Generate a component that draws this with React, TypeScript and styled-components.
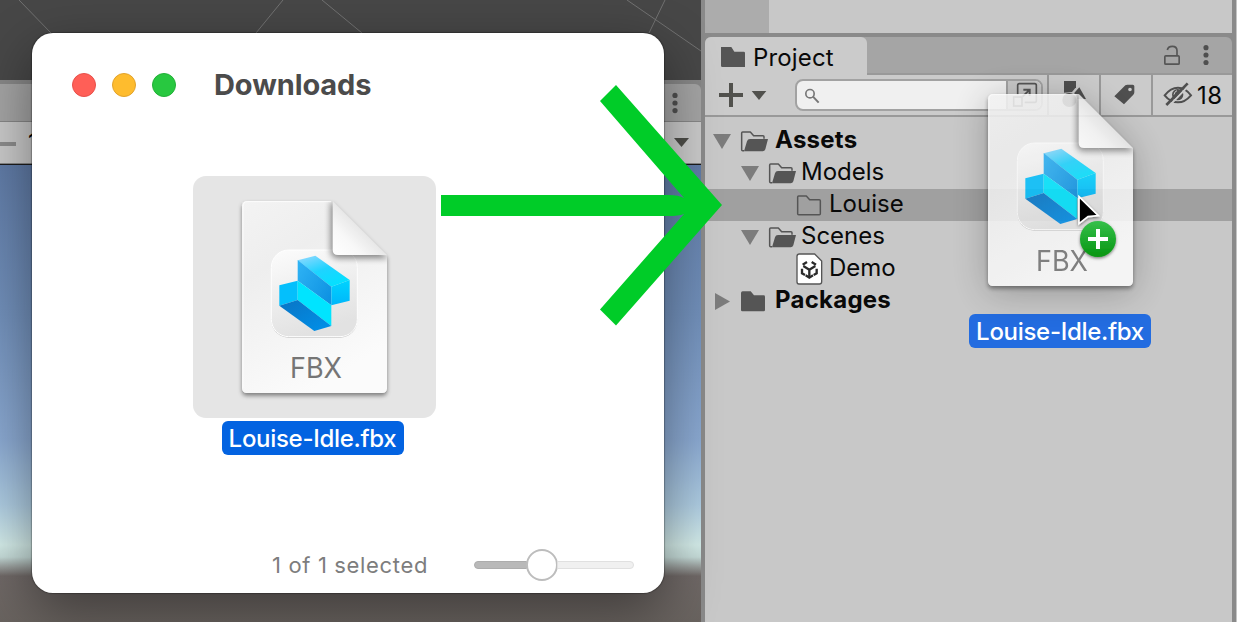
import React from "react";
import styled, { createGlobalStyle } from "styled-components";

const Global = createGlobalStyle`
  * { box-sizing: border-box; }
  html, body { margin: 0; padding: 0; overflow: hidden; }
  body { font-family: Inter, "Liberation Sans", sans-serif; }
  svg { display: block; flex: none; }
`;

const Desktop = styled.main`
  position: relative;
  display: flex;
  width: 1237px;
  height: 622px;
  overflow: hidden;
  background: #8a8a8a;
`;

/* ---------- scene / game column ---------- */
const SceneColumn = styled.section`
  display: flex;
  flex-direction: column;
  width: 701px;
  height: 622px;
  margin-right: 4px;
  background: #868686;
`;
const SceneView = styled.div`
  height: 80px;
  margin-bottom: 4px;
  background: #474747;
`;
const GameTabs = styled.div`
  display: flex;
  justify-content: flex-end;
  align-items: center;
  height: 37px;
  padding-right: 23px;
  background: #a3a3a3;
  border-radius: 0 6px 0 0;
`;
const GameToolbar = styled.div`
  display: flex;
  align-items: center;
  justify-content: space-between;
  height: 41px;
  margin: 1px 0 1px;
  padding-right: 12px;
  background: #c8c8c8;
  font-size: 24px;
`;
const ScaleControl = styled.div`
  display: flex;
  align-items: center;
  gap: 12px;
  height: 40px;
  padding-bottom: 1px;
`;
const ScaleTrack = styled.div`
  width: 16px;
  height: 4px;
  margin-top: 3px;
  background: #8b8b8b;
`;
const Sky = styled.div`
  flex: 1;
  border-top: 1px solid #1c1c1c;
  background: linear-gradient(#5f7aa5 0, #718fb9 150px, #8aa8d0 275px, #adcbe0 340px, #d3ebe8 380px, #c5dbd8 392px, #979c9a 402px, #6f6866 411px, #69635f 457px);
`;

/* ---------- downloads window ---------- */
const FinderWindow = styled.section`
  position: absolute;
  left: 32px;
  top: 33px;
  display: flex;
  flex-direction: column;
  align-items: center;
  width: 632px;
  height: 560px;
  border-radius: 21px;
  background: #fff;
  box-shadow: 0 0 1px 1px rgba(0, 0, 0, 0.26), 0 18px 54px rgba(0, 0, 0, 0.42);
`;
const TitleBar = styled.header`
  display: flex;
  align-items: center;
  align-self: stretch;
  gap: 16px;
  height: 103px;
  padding: 0 40px;
`;
const Light = styled.i<{ $fill: string; $rim: string }>`
  width: 24px;
  height: 24px;
  border-radius: 50%;
  background: ${(p) => p.$fill};
  border: 1px solid ${(p) => p.$rim};
`;
const WindowTitle = styled.h1`
  margin: 0 0 0 22px;
  color: #4b4b4b;
  font-size: 29px;
  font-weight: 700;
  line-height: 36px;
  letter-spacing: -0.1px;
`;
const FileCell = styled.div`
  display: flex;
  flex-direction: column;
  align-items: center;
  margin: 40px 0 0 -68px;
`;
const Selection = styled.div`
  display: flex;
  justify-content: center;
  width: 243px;
  height: 242px;
  padding-top: 25px;
  border-radius: 13px;
  background: #e5e5e5;
`;
const FileLabel = styled.div<{ $bg: string; $nudge?: number }>`
  width: 182px;
  height: 34px;
  margin: 3px ${(p) => p.$nudge ?? 0}px 0 0;
  border-radius: 6px;
  background: ${(p) => p.$bg};
  color: #fff;
  font-size: 24px;
  font-weight: 500;
  line-height: 35px;
  letter-spacing: -0.3px;
  text-align: center;
  white-space: nowrap;
`;
const StatusBar = styled.footer`
  display: flex;
  align-items: center;
  justify-content: flex-end;
  align-self: stretch;
  gap: 46px;
  height: 56px;
  margin-top: auto;
  padding-right: 30px;
  color: #7d7d7d;
  font-size: 22px;
  letter-spacing: 0.65px;
`;
const Slider = styled.div`
  display: flex;
  align-items: center;
  width: 160px;
  height: 32px;
`;
const Track = styled.div<{ $w: number; $filled?: boolean }>`
  width: ${(p) => p.$w}px;
  height: 8px;
  border: 1px solid ${(p) => (p.$filled ? "#adadad" : "#e0e0e0")};
  border-radius: ${(p) => (p.$filled ? "4px 0 0 4px" : "0 4px 4px 0")};
  background: ${(p) => (p.$filled ? "#b9b9b9" : "#f0f0f0")};
`;
const Knob = styled.div`
  width: 32px;
  height: 32px;
  margin: 0 -1px;
  border: 2px solid #bdbdbd;
  border-radius: 50%;
  background: #fff;
`;

/* ---------- project column ---------- */
const ProjectColumn = styled.section`
  display: flex;
  flex-direction: column;
  width: 527px;
  height: 622px;
  background: #8a8a8a;
`;
const RightEdge = styled.div`
  width: 1px;
  margin-left: 4px;
  background: #c4c4c4;
`;
const UpperPanel = styled.div`
  height: 33px;
  margin-bottom: 4px;
  background: #c8c8c8;
`;
const UpperShade = styled.div`
  width: 64px;
  height: 33px;
  background: #acacac;
`;
const Tabs = styled.div`
  display: flex;
  justify-content: space-between;
  height: 38px;
  border-radius: 6px 6px 0 0;
  background: linear-gradient(#a5a5a5 36px, #999 36px);
`;
const Tab = styled.div`
  display: flex;
  align-items: center;
  gap: 8px;
  width: 162px;
  height: 38px;
  padding: 2px 0 0 16px;
  border-radius: 6px 6px 0 0;
  background: #cbcbcb;
  color: #090909;
  font-size: 24px;
  letter-spacing: 0.15px;
`;
const Toolbar = styled.div`
  display: flex;
  height: 42px;
  border-bottom: 2px solid #999;
  background: #cbcbcb;
`;
const AddButton = styled.div`
  width: 90px;
`;
const Search = styled.div`
  display: flex;
  justify-content: space-between;
  width: 248px;
  height: 32px;
  margin: 4px 4px 0 0;
  border: 2px solid #a2a2a2;
  border-radius: 8px;
  background: #f0f0f0;
  overflow: hidden;
`;
const SearchScope = styled.div`
  width: 35px;
  border-left: 2px solid #a2a2a2;
  background: #c8c8c8;
`;
const ToolCell = styled.div<{ $w: number }>`
  display: flex;
  align-items: center;
  width: ${(p) => p.$w}px;
  border-left: 2px solid #999;
  color: #090909;
  font-size: 24px;
  letter-spacing: 0.5px;
`;
const Tree = styled.div`
  flex: 1;
  padding-top: 8px;
  background: #c8c8c8;
`;
const Row = styled.div<{ $level: number; $selected?: boolean; $bold?: boolean }>`
  display: flex;
  align-items: center;
  height: 32px;
  padding-left: ${(p) => 7 + p.$level * 28}px;
  background: ${(p) => (p.$selected ? "#a0a0a0" : "transparent")};
  color: #090909;
  font-size: 24px;
  font-weight: ${(p) => (p.$bold ? 700 : 400)};
  letter-spacing: ${(p) => (p.$bold ? 0.25 : 0)}px;
`;
const RowText = styled.span`
  padding-bottom: 4px;
`;
const Disclosure = styled.div`
  width: 28px;
`;
const IconSlot = styled.div<{ $root: boolean }>`
  display: flex;
  align-items: center;
  width: ${(p) => (p.$root ? 35 : 33)}px;
  height: 32px;
`;
const TabActions = styled.div`
  width: 79px;
  height: 37px;
`;

/* ---------- dragged item ---------- */
const DragItem = styled.div`
  position: absolute;
  left: 969px;
  top: 94px;
  display: flex;
  flex-direction: column;
  align-items: center;
  gap: 25px;
  width: 182px;
`;
const DragDoc = styled.div`
  opacity: 0.87;
  filter: drop-shadow(0 5px 18px rgba(0, 0, 0, 0.28));
`;
const Overlay = styled.svg<{ $x: number; $y: number }>`
  position: absolute;
  left: ${(p) => p.$x}px;
  top: ${(p) => p.$y}px;
  overflow: visible;
`;

function FbxDocument({ id }: { id: string }) {
  const u = (n: string) => `url(#${id}-${n})`;
  return (
    <svg width="145" height="192" viewBox="0 0 435 576" overflow="visible">
      <defs>
        <linearGradient id={`${id}-page`} x1="0" y1="0" x2="0.45" y2="1">
          <stop offset="0" stopColor="#f3f3f3" />
          <stop offset="0.35" stopColor="#eeeeee" />
          <stop offset="1" stopColor="#fbfbfb" />
        </linearGradient>
        <linearGradient id={`${id}-flap`} x1="0" y1="1" x2="0.55" y2="0.45">
          <stop offset="0" stopColor="#fff" />
          <stop offset="0.5" stopColor="#f8f8f8" />
          <stop offset="1" stopColor="#e4e4e4" />
        </linearGradient>
        <linearGradient id={`${id}-tile`} x1="0" y1="0" x2="0.3" y2="1">
          <stop offset="0" stopColor="#fcfcfc" />
          <stop offset="1" stopColor="#e2e2e2" />
        </linearGradient>
        <linearGradient id={`${id}-top`} x1="0.2" y1="0" x2="0.8" y2="1">
          <stop offset="0" stopColor="#86d8ff" />
          <stop offset="0.45" stopColor="#1fd3ff" />
          <stop offset="1" stopColor="#00e2ff" />
        </linearGradient>
        <linearGradient id={`${id}-front`} x1="0" y1="0" x2="1" y2="0.8">
          <stop offset="0" stopColor="#30b4f5" />
          <stop offset="1" stopColor="#0e92e2" />
        </linearGradient>
        <linearGradient id={`${id}-side`} x1="0" y1="0" x2="0" y2="1">
          <stop offset="0" stopColor="#00d4ff" />
          <stop offset="1" stopColor="#00b6fa" />
        </linearGradient>
        <linearGradient id={`${id}-base`} x1="0" y1="0" x2="1" y2="1">
          <stop offset="0" stopColor="#0a74c4" />
          <stop offset="1" stopColor="#0091ea" />
        </linearGradient>
        <filter id={`${id}-soft`} x="-30%" y="-30%" width="170%" height="170%">
          <feGaussianBlur stdDeviation="10" />
        </filter>
        <filter id={`${id}-drop`} x="-10%" y="-10%" width="120%" height="120%">
          <feDropShadow dx="0" dy="8" stdDeviation="6" floodOpacity="0.45" />
        </filter>
        <clipPath id={`${id}-clip`}>
          <path d="M14 0H272L435 163V562a14 14 0 0 1-14 14H14a14 14 0 0 1-14-14V14A14 14 0 0 1 14 0Z" />
        </clipPath>
      </defs>
      <path filter={u("drop")} fill={u("page")} d="M14 0H272L435 163V562a14 14 0 0 1-14 14H14a14 14 0 0 1-14-14V14A14 14 0 0 1 14 0Z" />
      <rect x="88" y="149" width="258" height="261" rx="52" fill="#c4c4c4" />
      <rect x="88" y="147" width="258" height="260" rx="52" fill={u("tile")} stroke="#fff" strokeWidth="3" />
      <path fill={u("top")} d="M167 178L220 164L323 237L268 257Z" />
      <path fill={u("front")} d="M167 177L268 257V313L167 239Z" />
      <path fill={u("side")} d="M268 257L323 237V299L268 313Z" />
      <path fill="#04bffc" d="M112 253L167 239V297L112 314Z" />
      <path fill="#00e4ff" d="M167 239L268 313V375L167 297Z" />
      <path fill={u("base")} d="M112 314L167 297L268 375L217 390Z" />
      <g clipPath={u("clip")}>
        <path d="M266 8V150Q266 172 288 172H440L272 0Z" fill="#000" opacity="0.45" filter={u("soft")} />
      </g>
      <path fill={u("flap")} d="M272 0L435 163Q428 162 412 162H288Q272 162 272 146Z" />
      <path fill="none" stroke="#fff" strokeWidth="3" opacity="0.8" d="M3 560V16Q3 2 16 2H268" />
      <text x="144" y="530" fontSize="84" fontWeight="400" fill="#757575" textLength="156" lengthAdjust="spacingAndGlyphs">
        FBX
      </text>
    </svg>
  );
}

function Foldout({ open }: { open?: boolean }) {
  return (
    <svg width="20" height="20" viewBox="0 0 20 20" fill="#7c7c7c">
      <path d={open ? "M1 3H19L10 18Z" : "M3 2L18 10.5L3 19Z"} />
    </svg>
  );
}

type FolderKind = "open" | "empty" | "closed";
function Folder({ kind }: { kind: FolderKind }) {
  return (
    <svg width="28" height="22" viewBox="0 0 84 66">
      {kind === "closed" && <path fill="#555" d="M3 9Q3 4 8 4H32L42 16H71Q75 16 75 20V60Q75 64 71 64H7Q3 64 3 60Z" />}
      {kind === "empty" && (
        <path fill="none" stroke="#555" strokeWidth="4.5" strokeLinejoin="round" d="M5 9Q5 6 8 6H31L41 17H70Q73 17 73 20V59Q73 62 70 62H8Q5 62 5 59Z" />
      )}
      {kind === "open" && (
        <>
          <path fill="none" stroke="#555" strokeWidth="4.5" strokeLinejoin="round" d="M12 62H8Q5 62 5 59V9Q5 6 8 6H31L41 17H69Q72 17 72 20V26" />
          <path fill="#555" d="M12 64L21 34Q23 27 30 27H84L76 58Q74 64 68 64Z" />
        </>
      )}
    </svg>
  );
}

function SceneAsset() {
  return (
    <svg width="28" height="32" viewBox="0 0 84 96">
      <path fill="#fff" stroke="#555" strokeWidth="4" strokeLinejoin="round" d="M10 3H56L77 24V86Q77 93 70 93H9Q3 93 3 86V10Q3 3 10 3Z" />
      <g fill="none" stroke="#2a2a2a" strokeWidth="7">
        <path d="M40 50V72M40 50L22 39M40 50L58 39" />
        <path d="M33 27L20 35M47 27L60 35M18 47V61L27 66M62 47V61L53 66" />
        <path d="M29 67L40 74L51 67" />
      </g>
    </svg>
  );
}

function MenuDots() {
  return (
    <svg width="6" height="22" viewBox="0 0 6 22" fill="#4f4f4f">
      <circle cx="3" cy="3.4" r="2.6" />
      <circle cx="3" cy="11" r="2.6" />
      <circle cx="3" cy="18.6" r="2.6" />
    </svg>
  );
}

const rows: { name: string; level: number; open?: boolean; leaf?: boolean; icon: FolderKind | "scene"; bold?: boolean; selected?: boolean }[] = [
  { name: "Assets", level: 0, open: true, icon: "open", bold: true },
  { name: "Models", level: 1, open: true, icon: "open" },
  { name: "Louise", level: 2, leaf: true, icon: "empty", selected: true },
  { name: "Scenes", level: 1, open: true, icon: "open" },
  { name: "Demo", level: 2, leaf: true, icon: "scene" },
  { name: "Packages", level: 0, icon: "closed", bold: true },
];

export default function App() {
  return (
    <>
      <Global />
      <Desktop>
        <SceneColumn>
          <SceneView>
            <svg width="701" height="80" viewBox="0 0 701 80" stroke="#7c7c7c" strokeWidth="0.8" fill="none">
              <path d="M19 0L51 33M283 0L256 33M322 0L362 33M627 0L701 51M665 0L649 33" />
            </svg>
          </SceneView>
          <GameTabs>
            <MenuDots />
          </GameTabs>
          <GameToolbar>
            <ScaleControl>
              <ScaleTrack />
              1
            </ScaleControl>
            <svg width="15" height="10" viewBox="0 0 15 10" fill="#4d4d48">
              <path d="M0 0H15L7.5 9Z" />
            </svg>
          </GameToolbar>
          <Sky />
        </SceneColumn>

        <ProjectColumn>
          <UpperPanel>
            <UpperShade />
          </UpperPanel>
          <Tabs>
            <Tab>
              <svg width="24" height="20" viewBox="3 4 72 60">
                <path fill="#555" d="M3 4H34L43 18H71Q75 18 75 22V64H7Q3 64 3 60Z" />
              </svg>
              Project
            </Tab>
            <TabActions>
              <svg width="79" height="37" viewBox="579 111 237 111" fill="none">
                <g stroke="#555" strokeWidth="5">
                  <rect x="614.5" y="167.5" width="43" height="25" rx="3" />
                  <path d="M622 150Q624 139 637 139Q651 139 651 152V166" />
                </g>
                <g fill="#4f4f4f">
                  <circle cx="738" cy="143" r="7.7" />
                  <circle cx="738" cy="165" r="7.7" />
                  <circle cx="738" cy="187.5" r="7.7" />
                </g>
              </svg>
            </TabActions>
          </Tabs>
          <Toolbar>
            <AddButton>
              <svg width="90" height="40" viewBox="15 225 270 120" fill="#51514d">
                <path d="M87 249H99V279H129V291H99V321H87V291H57V279H87Z" />
                <path d="M155 273H199L177 300Z" />
              </svg>
            </AddButton>
            <Search>
              <svg width="36" height="28" viewBox="291 243 108 84" fill="none" stroke="#777">
                <circle cx="330" cy="281" r="12.5" strokeWidth="5" />
                <path d="M339 290L356 308" strokeWidth="6" />
              </svg>
              <SearchScope>
                <svg width="33" height="28" viewBox="144 243 99 84" fill="none" stroke="#555" strokeWidth="5">
                  <path d="M173 284V256Q173 251 178 251H224Q229 251 229 256V302Q229 307 224 307H194" />
                  <path d="M190 269H209V288M209 269L188 290" strokeWidth="6" />
                  <rect x="161" y="291" width="25" height="27" />
                </svg>
              </SearchScope>
            </Search>
            <ToolCell $w={52}>
              <svg width="50" height="40" viewBox="267 225 150 120" fill="#4f4f4f">
                <path d="M312 243H348V262L336 276L312 278Z" />
                <path d="M358 262L378 297H352Q350 284 342 280Z" />
                <circle cx="328" cy="300" r="21" />
              </svg>
            </ToolCell>
            <ToolCell $w={52}>
              <svg width="50" height="40" viewBox="423 225 150 120" fill="#4f4f4f">
                <path fillRule="evenodd" d="M463 289L496 256Q498 254 502 254H518Q523 254 523 259V277Q523 281 520 284L492 313ZM510 263A5.5 5.5 0 1 0 510 274A5.5 5.5 0 1 0 510 263Z" />
              </svg>
            </ToolCell>
            <ToolCell $w={81}>
              <svg width="44" height="40" viewBox="579 225 132 120" fill="none" stroke="#4f4f4f">
                <path d="M614 286Q632 263 654 263Q676 263 693 286Q675 307 654 307Q631 307 614 286Z" strokeWidth="6" />
                <circle cx="653" cy="284" r="17" fill="#4f4f4f" stroke="none" />
                <path d="M651 272Q643 275 642 284" strokeWidth="3" stroke="#cbcbcb" />
                <path d="M689 254L624 321" strokeWidth="6" stroke="#cbcbcb" />
                <path d="M683 250L619 315" strokeWidth="8" />
              </svg>
              18
            </ToolCell>
          </Toolbar>
          <Tree>
            {rows.map((r) => (
              <Row key={r.name} $level={r.level} $selected={r.selected} $bold={r.bold}>
                <Disclosure>{!r.leaf && <Foldout open={r.open} />}</Disclosure>
                <IconSlot $root={r.level === 0}>{r.icon === "scene" ? <SceneAsset /> : <Folder kind={r.icon} />}</IconSlot>
                <RowText>{r.name}</RowText>
              </Row>
            ))}
          </Tree>
        </ProjectColumn>
        <RightEdge />

        <FinderWindow>
          <TitleBar>
            <Light $fill="#ff5f57" $rim="#e8504a" />
            <Light $fill="#febc2e" $rim="#e2a32c" />
            <Light $fill="#28c840" $rim="#22b037" />
            <WindowTitle>Downloads</WindowTitle>
          </TitleBar>
          <FileCell>
            <Selection>
              <FbxDocument id="source" />
            </Selection>
            <FileLabel $bg="#0363e1" $nudge={3}>Louise-Idle.fbx</FileLabel>
          </FileCell>
          <StatusBar>
            1 of 1 selected
            <Slider>
              <Track $w={53} $filled />
              <Knob />
              <Track $w={77} />
            </Slider>
          </StatusBar>
        </FinderWindow>

        <Overlay $x={441} $y={85} width="282" height="241" viewBox="441 85 282 241">
          <path
            fill="#00cc28"
            d="M441 195H668Q679 195 684 198L600 101L616 85L722 205L616 325.5L600 309.5L684 214Q679 216 668 216H441Z"
          />
        </Overlay>

        <DragItem>
          <DragDoc>
            <FbxDocument id="dragged" />
          </DragDoc>
          <FileLabel $bg="#236ce0">Louise-Idle.fbx</FileLabel>
        </DragItem>

        <Overlay $x={1076} $y={193} width="44" height="68" viewBox="348 339 132 204">
          <defs>
            <linearGradient id="badge" x1="0" y1="0" x2="0" y2="1">
              <stop offset="0" stopColor="#35c04a" />
              <stop offset="1" stopColor="#079512" />
            </linearGradient>
            <filter id="lift" x="-30%" y="-30%" width="160%" height="160%">
              <feDropShadow dx="0" dy="4" stdDeviation="4" floodOpacity="0.5" />
            </filter>
          </defs>
          <path filter="url(#lift)" fill="#000" stroke="#fff" strokeWidth="5" d="M357 350L415 407L384 410L357 431Z" />
          <circle filter="url(#lift)" cx="414" cy="477" r="54" fill="url(#badge)" />
          <path fill="#fff" d="M408 447H420V471H444V483H420V507H408V483H384V471H408Z" />
        </Overlay>
      </Desktop>
    </>
  );
}
